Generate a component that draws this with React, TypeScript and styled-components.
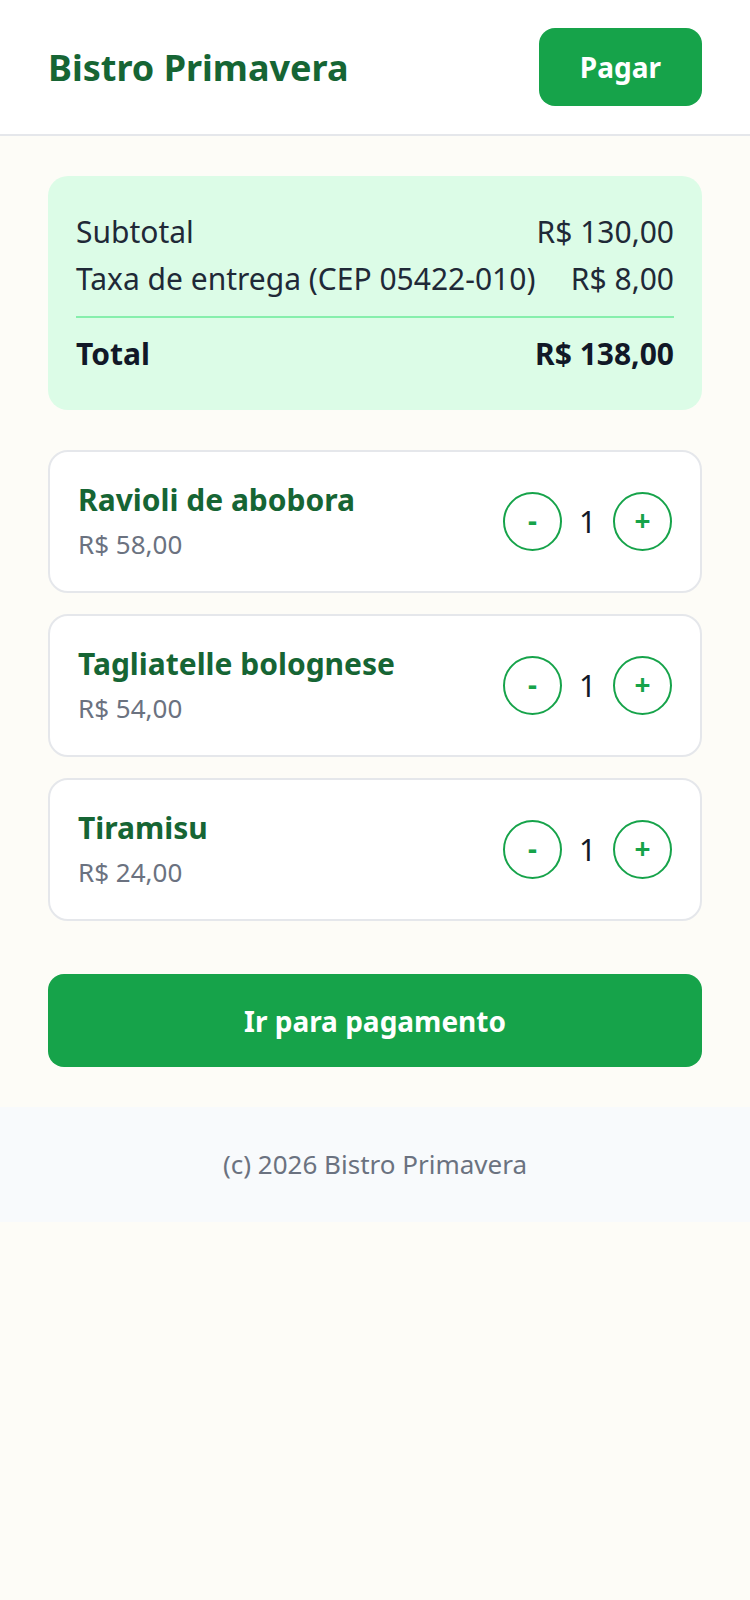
import React from 'react';
import styled, { createGlobalStyle } from 'styled-components';

const GlobalStyle = createGlobalStyle`
  html, body {
    margin: 0;
    padding: 0;
    background: #fdfcf7;
  }
  body {
    font-family: 'Noto Sans', 'Open Sans', sans-serif;
    color: #1f2937;
  }
  * {
    box-sizing: border-box;
  }
`;

const H = {
  Bar: styled.header`
    height: 136px;
    padding: 0 48px;
    display: flex;
    align-items: center;
    justify-content: space-between;
    background: #ffffff;
    border-bottom: 2px solid #e5e7eb;
  `,
  Title: styled.h1`
    margin: 0;
    font-size: 36px;
    font-weight: 700;
    color: #166534;
  `,
  Button: styled.button`
    height: 78px;
    padding: 0 41px;
    border: none;
    border-radius: 16px;
    background: #16a34a;
    color: #ffffff;
    font-family: inherit;
    font-size: 28px;
    font-weight: 700;
  `,
};

const S = {
  Main: styled.main`
    padding: 40px 48px;
    display: flex;
    flex-direction: column;
  `,
  Summary: styled.section`
    background: #dcfce7;
    border-radius: 20px;
    padding: 32px 28px 33px;
    margin-bottom: 40px;
  `,
  Row: styled.div<{ $strong?: boolean }>`
    display: flex;
    justify-content: space-between;
    font-size: 30px;
    line-height: 47px;
    font-weight: ${(p) => (p.$strong ? 700 : 400)};
    color: ${(p) => (p.$strong ? '#111827' : '#1f2937')};
  `,
  Divider: styled.hr`
    border: none;
    border-top: 2px solid #86efac;
    margin: 14px 0 12px;
  `,
};

const I = {
  List: styled.div`
    display: flex;
    flex-direction: column;
    gap: 21px;
  `,
  Card: styled.article`
    background: #ffffff;
    border: 2px solid #e5e7eb;
    border-radius: 20px;
    padding: 25px 28px;
    display: flex;
    align-items: center;
    justify-content: space-between;
  `,
  Name: styled.div`
    font-size: 30px;
    font-weight: 700;
    line-height: 45px;
    color: #166534;
  `,
  Price: styled.div`
    font-size: 26px;
    line-height: 44px;
    color: #6b7280;
  `,
  Stepper: styled.div`
    display: flex;
    align-items: center;
    gap: 16px;
  `,
  Step: styled.button`
    width: 59px;
    height: 59px;
    border-radius: 50%;
    border: 2px solid #16a34a;
    background: #ffffff;
    color: #16a34a;
    font-family: inherit;
    font-size: 28px;
    font-weight: 700;
    line-height: 1;
    padding: 0 0 4px;
    display: flex;
    align-items: center;
    justify-content: center;
  `,
  Qty: styled.span`
    min-width: 19px;
    text-align: center;
    font-size: 30px;
    color: #111827;
  `,
};

const Checkout = styled.button`
  margin-top: 53px;
  height: 93px;
  border: none;
  border-radius: 16px;
  background: #16a34a;
  color: #ffffff;
  font-family: inherit;
  font-size: 28px;
  font-weight: 700;
`;

const Footer = styled.footer`
  background: #f8fafc;
  padding: 37px 0;
  text-align: center;
  font-size: 26px;
  line-height: 41px;
  color: #6b7280;
`;

const items = [
  { name: 'Ravioli de abobora', price: 'R$ 58,00', qty: 1 },
  { name: 'Tagliatelle bolognese', price: 'R$ 54,00', qty: 1 },
  { name: 'Tiramisu', price: 'R$ 24,00', qty: 1 },
];

const App: React.FC = () => {
  return (
    <>
      <GlobalStyle />
      <H.Bar>
        <H.Title>Bistro Primavera</H.Title>
        <H.Button>Pagar</H.Button>
      </H.Bar>
      <S.Main>
        <S.Summary>
          <S.Row>
            <span>Subtotal</span>
            <span>R$ 130,00</span>
          </S.Row>
          <S.Row>
            <span>Taxa de entrega (CEP 05422-010)</span>
            <span>R$ 8,00</span>
          </S.Row>
          <S.Divider />
          <S.Row $strong>
            <span>Total</span>
            <span>R$ 138,00</span>
          </S.Row>
        </S.Summary>
        <I.List>
          {items.map((item) => (
            <I.Card key={item.name}>
              <div>
                <I.Name>{item.name}</I.Name>
                <I.Price>{item.price}</I.Price>
              </div>
              <I.Stepper>
                <I.Step>-</I.Step>
                <I.Qty>{item.qty}</I.Qty>
                <I.Step>+</I.Step>
              </I.Stepper>
            </I.Card>
          ))}
        </I.List>
        <Checkout>Ir para pagamento</Checkout>
      </S.Main>
      <Footer>(c) 2026 Bistro Primavera</Footer>
    </>
  );
};

export default App;
